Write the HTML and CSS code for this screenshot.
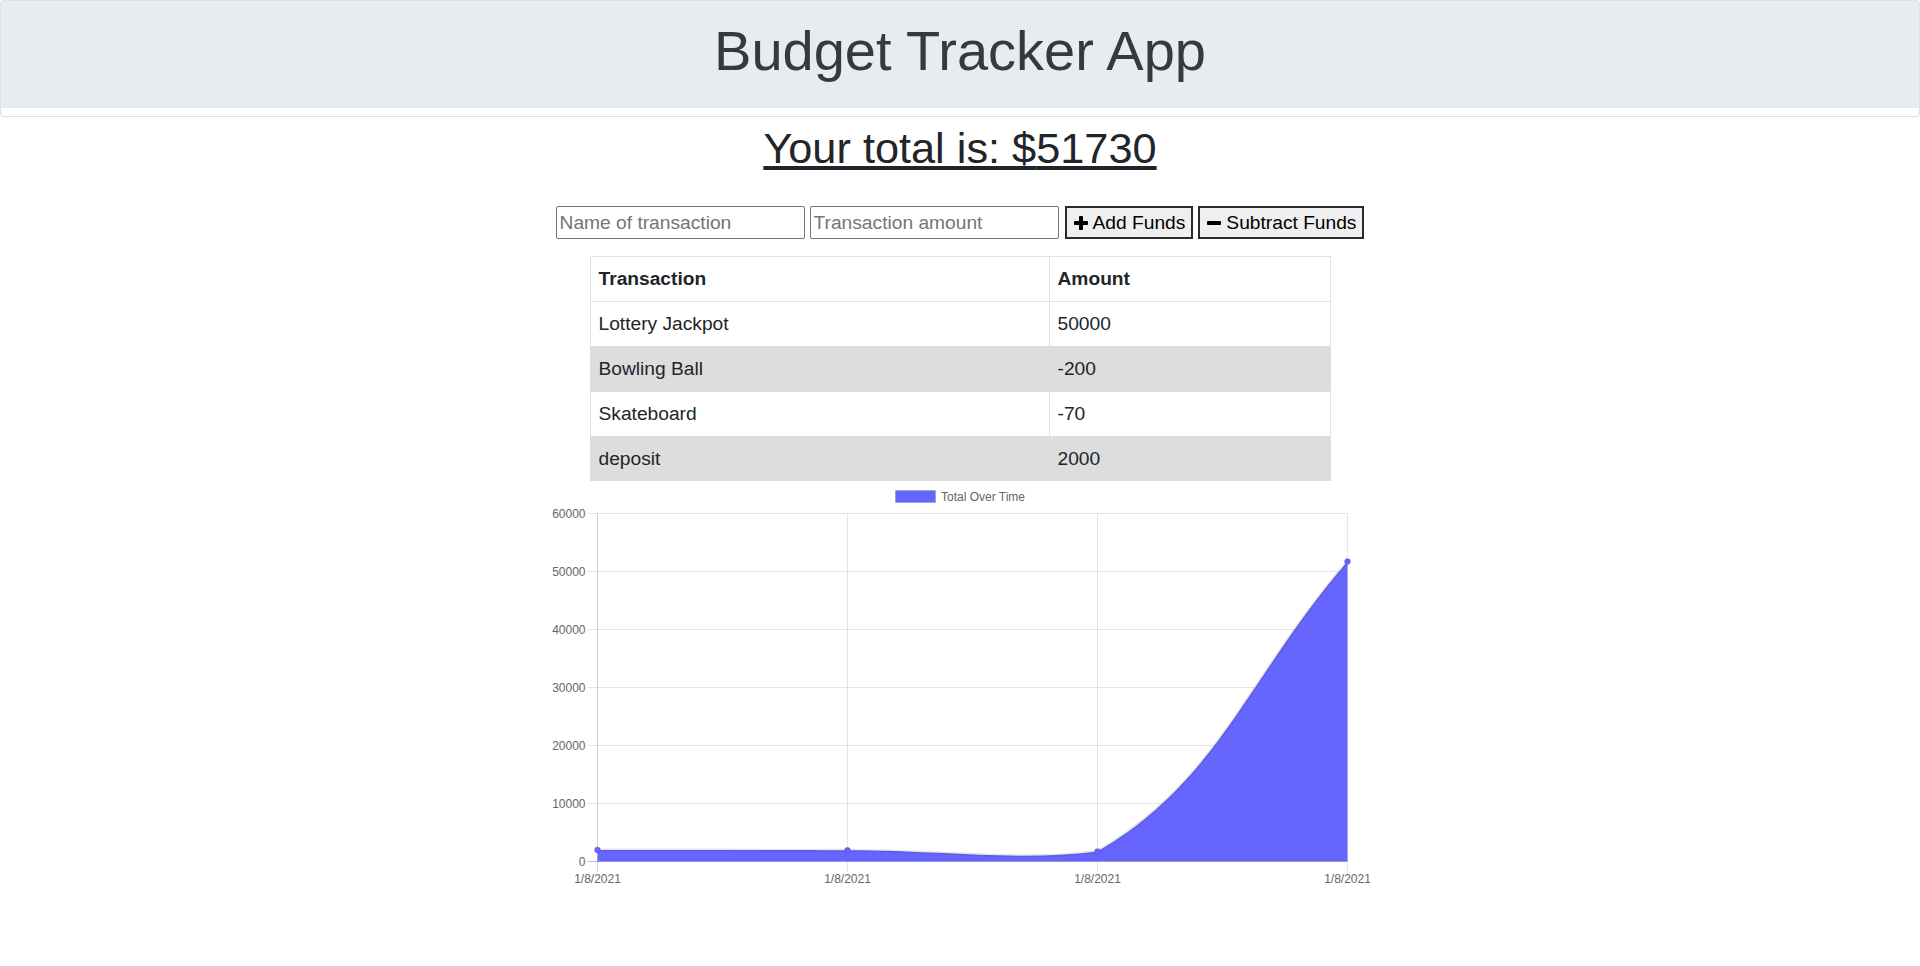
FILE: index.html
```html
<!DOCTYPE html>
<html lang="en">
<head>
<meta charset="utf-8">
<title>Budget Tracker App</title>
<link rel="stylesheet" href="styles.css">
</head>
<body>
<header class="card">
  <div class="jumbo">
    <h1 class="title">Budget Tracker App</h1>
  </div>
</header>
<main class="main">
  <h2 class="total"><u>Your total is: $<span>51730</span></u></h2>
  <form class="form">
    <input class="field" type="text" placeholder="Name of transaction">
    <input class="field" type="number" placeholder="Transaction amount">
    <button class="btn" type="button"><svg class="ico" width="14" height="14" viewBox="0 0 14 14"><rect x="5" y="0" width="4" height="14" rx="0.8"/><rect x="0" y="5" width="14" height="4" rx="0.8"/></svg>Add Funds</button>
    <button class="btn" type="button"><svg class="ico" width="14" height="14" viewBox="0 0 14 14"><rect x="0" y="5" width="14" height="4" rx="0.8"/></svg>Subtract Funds</button>
  </form>
  <table class="tbl">
    <colgroup><col class="c1"><col class="c2"></colgroup>
    <thead>
      <tr><th>Transaction</th><th>Amount</th></tr>
    </thead>
    <tbody>
      <tr><td>Lottery Jackpot</td><td>50000</td></tr>
      <tr class="alt"><td>Bowling Ball</td><td>-200</td></tr>
      <tr><td>Skateboard</td><td>-70</td></tr>
      <tr class="alt"><td>deposit</td><td>2000</td></tr>
    </tbody>
  </table>
  <svg class="chart" width="820" height="412" viewBox="0 0 820 412">
    <rect x="345.5" y="8.5" width="40" height="12" fill="#6666ff" stroke="rgba(0,0,0,0.1)" stroke-width="1"/>
    <text class="lg" x="391" y="18.5">Total Over Time</text>
    <g stroke="rgba(0,0,0,0.1)" stroke-width="1">
      <line x1="37.5" y1="31.5" x2="797.5" y2="31.5"/>
      <line x1="37.5" y1="89.5" x2="797.5" y2="89.5"/>
      <line x1="37.5" y1="147.5" x2="797.5" y2="147.5"/>
      <line x1="37.5" y1="205.5" x2="797.5" y2="205.5"/>
      <line x1="37.5" y1="263.5" x2="797.5" y2="263.5"/>
      <line x1="37.5" y1="321.5" x2="797.5" y2="321.5"/>
      <line x1="37.5" y1="379.5" x2="797.5" y2="379.5" stroke="rgba(0,0,0,0.25)"/>
      <line x1="47.5" y1="31.5" x2="47.5" y2="389.5" stroke="rgba(0,0,0,0.18)"/>
      <line x1="297.5" y1="31.5" x2="297.5" y2="389.5"/>
      <line x1="547.5" y1="31.5" x2="547.5" y2="389.5"/>
      <line x1="797.5" y1="31.5" x2="797.5" y2="389.5"/>
    </g>
    <g class="tk" text-anchor="end">
      <text x="35.5" y="35.5">60000</text>
      <text x="35.5" y="93.5">50000</text>
      <text x="35.5" y="151.5">40000</text>
      <text x="35.5" y="209.5">30000</text>
      <text x="35.5" y="267.5">20000</text>
      <text x="35.5" y="325.5">10000</text>
      <text x="35.5" y="383.5">0</text>
    </g>
    <g class="tk" text-anchor="middle">
      <text x="47.5" y="400.5">1/8/2021</text>
      <text x="297.5" y="400.5">1/8/2021</text>
      <text x="547.5" y="400.5">1/8/2021</text>
      <text x="797.5" y="400.5">1/8/2021</text>
    </g>
    <path d="M47.5,367.9 C147.5,368.06 197.5,368.0 297.5,368.31 C397.5,368.62 468.5,379.5 547.5,369.47 C668.5,299.57 697.5,195.47 797.5,79.47 L797.5,379.5 L47.5,379.5 Z" fill="#6666ff"/>
    <path d="M47.5,367.9 C147.5,368.06 197.5,368.0 297.5,368.31 C397.5,368.62 468.5,379.5 547.5,369.47 C668.5,299.57 697.5,195.47 797.5,79.47" fill="none" stroke="rgba(0,0,0,0.1)" stroke-width="3"/>
    <g fill="#6666ff" stroke="rgba(0,0,0,0.1)" stroke-width="1">
      <circle cx="47.5" cy="367.9" r="3"/>
      <circle cx="297.5" cy="368.31" r="3"/>
      <circle cx="547.5" cy="369.47" r="3"/>
      <circle cx="797.5" cy="79.47" r="3"/>
    </g>
  </svg>
</main>
</body>
</html>
```
FILE: styles.css
```css
html, body {
  margin: 0;
  padding: 0;
  background: #fff;
}
body {
  font-family: "Liberation Sans", Arial, sans-serif;
  color: #212529;
  font-size: 16px;
}
.card {
  border: 1px solid rgba(0, 0, 0, 0.125);
  border-radius: 4px;
  padding-bottom: 8px;
  background: #fff;
}
.jumbo {
  background: #e9ecef;
  padding: 16px 0 24px;
  border-radius: 3px 3px 0 0;
}
.title {
  margin: 0;
  text-align: center;
  font-size: 56px;
  line-height: 67px;
  font-weight: 400;
  color: #343a40;
}
.main {
  display: flex;
  flex-direction: column;
  align-items: center;
}
.total {
  margin: 5px 0 0;
  font-size: 43.3px;
  line-height: 52px;
  font-weight: 400;
  color: #212529;
}
.form {
  display: flex;
  align-items: center;
  gap: 5px;
  margin-top: 32px;
}
.field {
  box-sizing: border-box;
  width: 249px;
  height: 33px;
  margin: 0;
  padding: 1px 3px;
  border: 1px solid #767676;
  border-radius: 2px;
  font-family: "Liberation Sans", Arial, sans-serif;
  font-size: 19.2px;
  color: #212529;
  background: #fff;
}
.field::placeholder {
  color: #757575;
}
.field:nth-of-type(2) {
  margin-right: 1px;
}
.btn {
  box-sizing: border-box;
  height: 33px;
  display: flex;
  align-items: center;
  gap: 5px;
  padding: 1px 6px 1px 7px;
  border: 2px solid #2b2b2b;
  border-radius: 0;
  background: #efefef;
  font-family: "Liberation Sans", Arial, sans-serif;
  font-size: 19.2px;
  color: #000;
}
.ico {
  fill: #000;
  flex: none;
}
.tbl {
  margin-top: 17px;
  width: 740px;
  table-layout: fixed;
  border-collapse: collapse;
  font-size: 19.2px;
  border-left: 1px solid #dee2e6;
  border-right: 1px solid #dee2e6;
}
.c1 {
  width: 459px;
}
.c2 {
  width: 281px;
}
.tbl th,
.tbl td {
  text-align: left;
  padding: 8px;
  line-height: 28px;
  border-top: 1px solid #dee2e6;
  border-left: 1px solid #dee2e6;
  vertical-align: top;
}
.tbl th {
  font-weight: 700;
}
.tbl .alt td {
  background: #dddddd;
  border-color: #dddddd;
}
.tbl .alt td + td {
  border-left-color: #dddddd;
}
.chart {
  display: block;
  margin-top: 1px;
}
.lg,
.tk {
  font-family: "Liberation Sans", Arial, sans-serif;
  font-size: 12px;
  fill: #666;
}
```
